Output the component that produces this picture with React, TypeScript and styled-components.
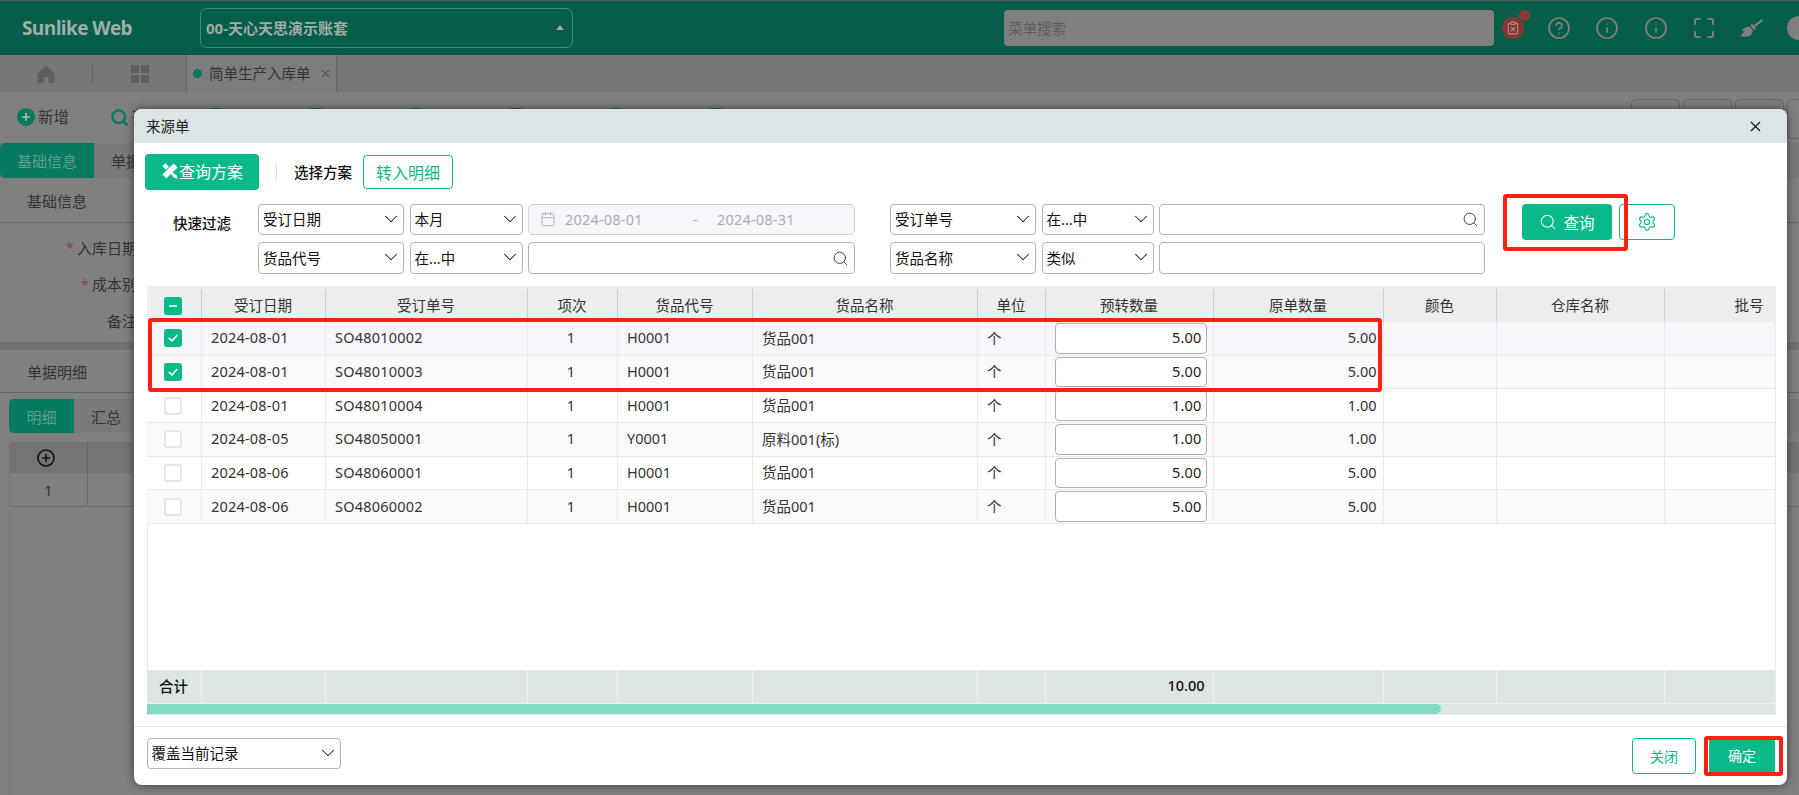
import React from "react";
import styled, { createGlobalStyle } from "styled-components";
import {
  Calendar,
  ChevronDown,
  CircleHelp,
  ClipboardX,
  Info,
  Maximize,
  Plus,
  Search,
  Settings,
  X,
} from "lucide-react";
import { FaBroom } from "react-icons/fa";

const Global = createGlobalStyle`
  html, body { margin: 0; padding: 0; height: 795px; overflow: hidden; background: #808080; }
  body { font-family: "Noto Sans", "Noto Sans CJK SC", sans-serif; font-size: 14.5px; color: #222; }
  * { box-sizing: border-box; }
`;

const Page = styled.div`
  position: relative;
  width: 1799px;
  height: 795px;
  overflow: hidden;
  background: #808080;
`;

/* ---------- dimmed page behind the dialog ---------- */
const TopBar = styled.header`
  height: 55px;
  display: flex;
  align-items: center;
  background: #055d4a;
  border-top: 1px solid #565656;
`;
const Logo = styled.div`
  width: 200px;
  flex-shrink: 0;
  padding-left: 22px;
  font: bold 19px "Open Sans", "Noto Sans", sans-serif;
  letter-spacing: -0.6px;
  color: #9fb0a9;
  white-space: nowrap;
`;
const AccountSelect = styled.div`
  width: 373px;
  height: 40px;
  flex-shrink: 0;
  display: flex;
  align-items: center;
  justify-content: space-between;
  padding: 0 8px 2px 5px;
  border: 1px solid #3b8f7b;
  border-radius: 7px;
  font-weight: bold;
  font-size: 15px;
  color: #a0aca6;
`;
const Caret = styled.span`
  width: 0;
  height: 0;
  border-left: 4.5px solid transparent;
  border-right: 4.5px solid transparent;
  border-bottom: 5px solid #a0aca6;
`;
const MenuSearch = styled.div`
  width: 489.5px;
  height: 36px;
  flex-shrink: 0;
  margin-left: 431px;
  padding: 0 0 2px 4px;
  display: flex;
  align-items: center;
  background: #808080;
  border-radius: 4px;
  color: #5d5d5d;
`;
const TopIcons = styled.div`
  display: flex;
  align-items: center;
  gap: 24.5px;
  margin-left: 8.5px;
  color: #808080;
  flex-shrink: 0;
`;
const AlertIcon = styled.span`
  position: relative;
  width: 22px;
  height: 22px;
  margin-right: -2px;
  display: flex;
  align-items: center;
  justify-content: center;
  border-radius: 50%;
  background: #8a3434;
  color: #b08a8a;
`;
const AlertDot = styled.i`
  position: absolute;
  top: -7px;
  right: -6px;
  width: 11px;
  height: 11px;
  border-radius: 50%;
  background: #8f3a3a;
`;
const Avatar = styled.span`
  width: 24px;
  height: 24px;
  border-radius: 50%;
  background: #808080;
  flex-shrink: 0;
`;
const TabBar = styled.nav`
  height: 37px;
  display: flex;
  align-items: center;
  background: #767876;
  color: #333;
`;
const NavIcon = styled.span`
  width: 46px;
  display: flex;
  justify-content: center;
  color: #5e5e5e;
`;
const NavHome = styled(NavIcon)`
  width: 92px;
`;
const NavDivider = styled.i`
  width: 1px;
  height: 18px;
  background: #5e5e5e;
`;
const NavGrid = styled(NavIcon)`
  width: 93px;
`;
const PageTab = styled.div`
  height: 37px;
  width: 151px;
  padding: 0 0 2px 6px;
  display: flex;
  align-items: center;
  border-left: 1px solid #666;
  border-right: 1px solid #666;
  background: #7c7e7c;
`;
const TabDot = styled.i`
  width: 9px;
  height: 9px;
  margin: 2px 7px 0 0;
  border-radius: 50%;
  background: #067a60;
`;
const TabClose = styled.span`
  display: flex;
  margin: 2px 0 0 8px;
`;
const ActionBar = styled.div`
  height: 51px;
  display: flex;
  padding-top: 16px;
  background: #808080;
`;
const ActionItem = styled.div<{ $w: number }>`
  width: ${(p) => p.$w}px;
  display: flex;
  align-items: flex-start;
  gap: 3px;
  font-size: 15.5px;
  line-height: 18px;
  color: #333;
  flex-shrink: 0;
`;
const PlusDot = styled.span`
  width: 18px;
  height: 18px;
  margin-left: 17px;
  display: flex;
  align-items: center;
  justify-content: center;
  border-radius: 50%;
  background: #067a60;
  color: #a5c7bd;
`;
const SearchGlyph = styled.span`
  margin-left: 14px;
  display: flex;
  color: #067a60;
`;
const Peek = styled.i<{ $c: string }>`
  display: block;
  width: 14px;
  height: 14px;
  margin-left: -7px;
  border-radius: 3px;
  background: ${(p) => p.$c};
`;
const PeekSpot = styled.div`
  width: 100px;
  flex-shrink: 0;
`;
const Tools = styled.div`
  display: flex;
  gap: 3px;
  margin-top: -9px;
  margin-left: 815px;
  flex-shrink: 0;
`;
const ToolButton = styled.div`
  width: 49px;
  height: 40px;
  flex-shrink: 0;
  border: 1px solid #686868;
  border-radius: 5px;
`;
const SegTabs = styled.div`
  height: 35px;
  display: flex;
  align-items: center;
  background: #7a7a7a;
`;
const SegActive = styled.div`
  width: 94px;
  height: 35px;
  display: flex;
  align-items: center;
  justify-content: center;
  border-radius: 5px 0 0 5px;
  background: #067a60;
  color: #5ea08d;
  font-size: 15px;
`;
const SegPlain = styled.div`
  padding-left: 17px;
  color: #333;
  font-size: 15px;
`;
const SectionTitle = styled.div`
  height: 45px;
  padding-left: 27px;
  display: flex;
  align-items: center;
  border-bottom: 1px solid #666;
  color: #333;
  font-size: 15px;
`;
const ShortTitle = styled(SectionTitle)`
  height: 43px;
`;
const FieldList = styled.div`
  height: 119px;
  padding-top: 6px;
`;
const FieldLabel = styled.div`
  width: 137px;
  height: 36.5px;
  display: flex;
  align-items: center;
  justify-content: flex-end;
  gap: 3px;
  color: #333;
  font-size: 15px;
  white-space: nowrap;
`;
const Star = styled.span`
  color: #8b3f3f;
`;
const Band = styled.div`
  height: 8px;
  background: #727272;
`;
const SubTabs = styled.div`
  display: flex;
  margin: 6px 0 0 9px;
  height: 34px;
  background: #7a7a7a;
`;
const SubActive = styled.div`
  width: 65px;
  display: flex;
  align-items: center;
  justify-content: center;
  border-radius: 5px 0 0 5px;
  background: #067a60;
  color: #5ea08d;
  font-size: 15px;
`;
const SubPlain = styled.div`
  padding-left: 17px;
  display: flex;
  align-items: center;
  color: #333;
  font-size: 15px;
`;
const BackTable = styled.div`
  margin: 9px 0 0 9px;
  height: 353px;
  border-left: 1px solid #747474;
`;
const BackHead = styled.div`
  height: 31px;
  display: grid;
  grid-template-columns: 78px 1fr;
  align-items: center;
  background: #737573;
`;
const BackIndexHead = styled.div`
  height: 31px;
  padding-right: 6px;
  display: flex;
  align-items: center;
  justify-content: center;
  border-right: 1px solid #666;
  color: #222;
`;
const BackRow = styled.div`
  height: 34px;
  display: grid;
  grid-template-columns: 78px 1fr;
  border-bottom: 1px solid #6c6c6c;
`;
const BackIndex = styled.div`
  display: flex;
  align-items: center;
  justify-content: center;
  border-right: 1px solid #6c6c6c;
  color: #333;
`;

/* ---------- dialog ---------- */
const Dialog = styled.section`
  position: absolute;
  left: 134px;
  top: 109px;
  width: 1653px;
  height: 676px;
  display: flex;
  flex-direction: column;
  background: #fff;
  border-radius: 8px;
  box-shadow: 0 0 10px rgba(0, 0, 0, 0.55);
  overflow: hidden;
`;
const DialogHead = styled.div`
  height: 34px;
  flex-shrink: 0;
  display: flex;
  align-items: center;
  justify-content: space-between;
  padding: 0 23px 2px 12px;
  background: #dce5e6;
  color: #222;
`;
const CloseButton = styled.span`
  display: flex;
  margin-top: 2px;
  color: #111;
`;
const DialogBody = styled.div`
  flex: 1;
  padding: 11px 12px 0 11px;
  display: flex;
  flex-direction: column;
  min-height: 0;
`;
const PlanBar = styled.div`
  height: 36px;
  flex-shrink: 0;
  display: flex;
  align-items: center;
`;
const PlanButton = styled.button`
  width: 114px;
  height: 36px;
  display: flex;
  align-items: center;
  justify-content: center;
  gap: 0;
  padding: 0 0 2px;
  border: 0;
  border-radius: 4px;
  background: #0ab98a;
  color: #fff;
  font: inherit;
  font-size: 16px;
`;
const PlanDivider = styled.i`
  width: 1px;
  height: 14px;
  margin: 0 17px;
  background: #d8d8d8;
`;
const PlanLabel = styled.span`
  font-weight: 500;
  color: #111;
  margin: -2px 11px 0 0;
`;
const OutlineButton = styled.button<{ $w: number; $h: number; $size?: number }>`
  width: ${(p) => p.$w}px;
  height: ${(p) => p.$h}px;
  display: flex;
  align-items: center;
  justify-content: center;
  padding: 0 0 1px;
  background: #fff;
  border: 1px solid #0ab98a;
  border-radius: 4px;
  color: #0ab98a;
  font: inherit;
  font-size: ${(p) => p.$size ?? 16}px;
`;
const FilterBar = styled.div`
  margin-top: 14px;
  height: 70px;
  flex-shrink: 0;
  display: flex;
  align-items: flex-start;
`;
const FilterLabel = styled.div`
  width: 113px;
  height: 36px;
  padding-left: 28px;
  display: flex;
  align-items: center;
  font-weight: 500;
  color: #111;
`;
const FilterRows = styled.div`
  display: flex;
  flex-direction: column;
  gap: 7px;
  width: 1227px;
`;
const FilterRow = styled.div<{ $h: number }>`
  height: ${(p) => p.$h}px;
  display: flex;
  gap: 35px;
`;
const FilterGroup = styled.div`
  display: flex;
  gap: 5.5px;
`;
const SelectBox = styled.div<{ $w: number }>`
  width: ${(p) => p.$w}px;
  height: 100%;
  display: flex;
  align-items: center;
  justify-content: space-between;
  padding: 0 1px 2px 4px;
  background: #fff;
  border: 1px solid #b4b4b4;
  border-radius: 4px;
  color: #111;
  white-space: nowrap;
`;
const DateRange = styled.div`
  width: 327px;
  height: 100%;
  display: flex;
  align-items: center;
  padding: 0 0 1px 11px;
  background: #f5f6fa;
  border: 1px solid #cfd2da;
  border-radius: 5px;
  color: #a9adb7;
`;
const DateText = styled.span`
  margin-left: 9px;
  width: 80px;
  letter-spacing: 0.2px;
  white-space: nowrap;
`;
const DateDash = styled.span`
  margin: 0 7px 0 48px;
  width: 8px;
`;
const SearchInput = styled.div<{ $w: number }>`
  width: ${(p) => p.$w}px;
  height: 100%;
  display: flex;
  align-items: center;
  justify-content: flex-end;
  padding-right: 5px;
  background: #fff;
  border: 1px solid #b4b4b4;
  border-radius: 4px;
  color: #333;
`;
const QueryButton = styled.button`
  width: 90px;
  height: 36px;
  margin-left: 37px;
  display: flex;
  align-items: center;
  justify-content: center;
  gap: 6px;
  padding: 0;
  border: 0;
  border-radius: 4px;
  background: #0ab98a;
  color: #fff;
  font: inherit;
  font-size: 15.5px;
`;
const GearButton = styled(OutlineButton)`
  margin-left: 7px;
`;

const COLUMNS = "55px 124px 202px 90px 135px 225px 68px 168px 170px 113px 168px 111px";

const Grid = styled.div`
  margin: 12px 0 0 1.5px;
  width: 1629px;
  flex: 1;
  display: flex;
  flex-direction: column;
  min-height: 0;
  border-left: 1px solid #e8e8ee;
  border-right: 1px solid #e8e8ee;
  border-bottom: 1px solid #e8e8ee;
`;
const HeadRow = styled.div`
  height: 36px;
  flex-shrink: 0;
  display: grid;
  grid-template-columns: ${COLUMNS};
  background: #ebeeed;
  border-top: 3px solid #f0f2f1;
  margin-left: -1px;
  margin-right: -1px;
`;
const HeadCell = styled.div`
  display: flex;
  align-items: center;
  justify-content: center;
  padding-bottom: 3px;
  border-right: 1px solid #c9cee0;
  color: #333;
  white-space: nowrap;
  &:first-child { padding: 0 2px 0 0; }
  &:last-child { border-right: 0; padding-left: 58px; }
`;
const BodyRow = styled.div<{ $bg: string }>`
  height: 33.67px;
  flex-shrink: 0;
  display: grid;
  grid-template-columns: ${COLUMNS};
  margin-left: -1px;
  background: ${(p) => p.$bg};
  border-bottom: 1px solid #e8e8ee;
`;
const Cell = styled.div<{ $align?: string; $num?: boolean }>`
  display: flex;
  align-items: center;
  justify-content: ${(p) => p.$align ?? "flex-start"};
  padding: ${(p) => (p.$align === "center" ? "0 2px 2px 0" : "0 6px 2px 9.5px")};
  border-right: 1px solid #e8e8ee;
  color: #333;
  white-space: nowrap;
  letter-spacing: ${(p) => (p.$num ? "0.2px" : "0")};
  &:last-child { border-right: 0; }
`;
const CheckCell = styled(Cell)`
  padding: 0 2px 0 0;
`;
const QtyCell = styled(Cell)`
  padding: 1px 6px 1px 9.5px;
`;
const QtyInput = styled.input`
  width: 100%;
  height: 100%;
  padding: 0 4px 2px 0;
  border: 1px solid #b0b0b0;
  border-radius: 4px;
  outline: 0;
  text-align: right;
  background: #fff;
  color: #222;
  font: inherit;
  letter-spacing: 0.2px;
`;
const Check = styled.span<{ $on?: boolean }>`
  width: 18px;
  height: 18px;
  display: flex;
  align-items: center;
  justify-content: center;
  border-radius: 3px;
  background: ${(p) => (p.$on ? "#0ab98a" : "#fff")};
  border: ${(p) => (p.$on ? "0" : "2px solid #e2e6ee")};
`;
const GridFill = styled.div`
  flex: 1;
`;
const SumRow = styled.div`
  height: 34px;
  flex-shrink: 0;
  display: grid;
  grid-template-columns: ${COLUMNS};
  margin-left: -1px;
  background: #dce5e3;
  border-bottom: 1px solid #eef1f0;
`;
const SumCell = styled.div<{ $end?: boolean; $mid?: boolean }>`
  display: flex;
  align-items: center;
  justify-content: ${(p) => (p.$end ? "flex-end" : p.$mid ? "center" : "flex-start")};
  padding-right: ${(p) => (p.$end ? "8px" : "0")};
  padding-bottom: 2px;
  border-right: 1px solid #eef1f0;
  font-weight: 500;
  color: #111;
  &:last-child { border-right: 0; }
`;
const ScrollTrack = styled.div`
  height: 10px;
  flex-shrink: 0;
  margin-left: -1px;
  background: #dce5e3;
`;
const ScrollThumb = styled.div`
  width: 1294.5px;
  height: 100%;
  border-radius: 0 6px 6px 0;
  background: #84dbc3;
`;
const DialogFoot = styled.div`
  height: 59px;
  margin-top: 11.5px;
  flex-shrink: 0;
  display: flex;
  align-items: flex-start;
  justify-content: space-between;
  padding: 11px 12px 0 12.5px;
  border-top: 1px solid #dfe3ea;
`;
const ModeSelect = styled(SelectBox)`
  height: 31px;
`;
const FootButtons = styled.div`
  display: flex;
  gap: 13px;
`;
const ConfirmButton = styled.button`
  width: 66px;
  height: 36px;
  padding: 0 0 2px;
  border: 0;
  border-radius: 4px;
  background: #0ab98a;
  color: #fff;
  font: inherit;
  font-size: 14px;
`;

/* ---------- red annotation frames lying over the dialog ---------- */
const RedFrame = styled.div`
  position: absolute;
  border: 4px solid #ff2010;
  border-radius: 3px;
  pointer-events: none;
`;
const RowsFrame = styled(RedFrame)`
  left: 148px;
  top: 318px;
  width: 1234px;
  height: 74px;
`;
const QueryFrame = styled(RedFrame)`
  left: 1503px;
  top: 194px;
  width: 124.5px;
  height: 57px;
`;
const ConfirmFrame = styled(RedFrame)`
  left: 1704px;
  top: 736px;
  width: 78.5px;
  height: 40px;
`;

const HEADS = ["受订日期", "受订单号", "项次", "货品代号", "货品名称", "单位", "预转数量", "原单数量", "颜色", "仓库名称", "批号"];
const ROWS = [
  { on: true, bg: "#f4f6fa", date: "2024-08-01", no: "SO48010002", code: "H0001", name: "货品001", qty: "5.00" },
  { on: true, bg: "#f9f9f9", date: "2024-08-01", no: "SO48010003", code: "H0001", name: "货品001", qty: "5.00" },
  { on: false, bg: "#ffffff", date: "2024-08-01", no: "SO48010004", code: "H0001", name: "货品001", qty: "1.00" },
  { on: false, bg: "#f9f9f9", date: "2024-08-05", no: "SO48050001", code: "Y0001", name: "原料001(标)", qty: "1.00" },
  { on: false, bg: "#ffffff", date: "2024-08-06", no: "SO48060001", code: "H0001", name: "货品001", qty: "5.00" },
  { on: false, bg: "#f9f9f9", date: "2024-08-06", no: "SO48060002", code: "H0001", name: "货品001", qty: "5.00" },
];

const Chevron = () => <ChevronDown size={22} strokeWidth={1.15} color="#222" />;

const HomeGlyph = () => (
  <svg width="18" height="18" viewBox="0 0 18 18" fill="currentColor">
    <path d="M9 0.5 L0.5 8.6 V18 H6.5 V12 H11.5 V18 H17.5 V8.6 Z" />
  </svg>
);
const GridGlyph = () => (
  <svg width="18" height="18" viewBox="0 0 18 18" fill="currentColor">
    <rect x="0" y="0" width="8" height="8" />
    <rect x="10" y="0" width="8" height="8" />
    <rect x="0" y="10" width="8" height="8" />
    <rect x="10" y="10" width="8" height="8" />
  </svg>
);
const PlanGlyph = () => (
  <svg width="18" height="18" viewBox="0 0 18 18" fill="#fff">
    <path d="M12.6 1.4 L16.6 5.4 L5.4 16.6 L1.4 12.6 Z" />
    <path d="M4.4 1.2 L8 4.8 L5 7.8 L1.4 4.2 Z" />
    <path d="M11.2 10.2 L15.6 13.2 L16.8 16.8 L13.2 15.8 L10.2 12.2 Z" />
  </svg>
);
const TickGlyph = () => (
  <svg width="12" height="12" viewBox="0 0 12 12" fill="none" stroke="#fff" strokeWidth="1.6" strokeLinecap="round" strokeLinejoin="round">
    <path d="M2.2 6.4 L5 9 L9.8 3.4" />
  </svg>
);
const DashGlyph = () => (
  <svg width="12" height="12" viewBox="0 0 12 12" stroke="#fff" strokeWidth="1.5">
    <path d="M2 6 H10" />
  </svg>
);

export default function App() {
  return (
    <>
      <Global />
      <Page>
        <TopBar>
          <Logo>Sunlike Web</Logo>
          <AccountSelect>
            00-天心天思演示账套
            <Caret />
          </AccountSelect>
          <MenuSearch>菜单搜索</MenuSearch>
          <TopIcons>
            <AlertIcon>
              <ClipboardX size={14} strokeWidth={2} />
              <AlertDot />
            </AlertIcon>
            <CircleHelp size={24} strokeWidth={1.7} />
            <Info size={24} strokeWidth={1.7} />
            <Info size={24} strokeWidth={1.7} />
            <Maximize size={24} strokeWidth={1.9} />
            <FaBroom size={22} />
            <Avatar />
          </TopIcons>
        </TopBar>
        <TabBar>
          <NavHome>
            <HomeGlyph />
          </NavHome>
          <NavDivider />
          <NavGrid>
            <GridGlyph />
          </NavGrid>
          <PageTab>
            <TabDot />
            简单生产入库单
            <TabClose>
              <X size={13} strokeWidth={1.6} />
            </TabClose>
          </PageTab>
        </TabBar>
        <ActionBar>
          <ActionItem $w={96}>
            <PlusDot>
              <Plus size={12} strokeWidth={3} />
            </PlusDot>
            新增
          </ActionItem>
          <ActionItem $w={120}>
            <SearchGlyph>
              <Search size={19} strokeWidth={3} />
            </SearchGlyph>
            查询
          </ActionItem>
          <PeekSpot>
            <Peek $c="#0a6a55" />
          </PeekSpot>
          <PeekSpot>
            <Peek $c="#067a60" />
          </PeekSpot>
          <PeekSpot>
            <Peek $c="#067a60" />
          </PeekSpot>
          <PeekSpot>
            <Peek $c="#8a3434" />
          </PeekSpot>
          <PeekSpot>
            <Peek $c="#067a60" />
          </PeekSpot>
          <PeekSpot>
            <Peek $c="#067a60" />
          </PeekSpot>
          <Tools>
            <ToolButton />
            <ToolButton />
            <ToolButton />
            <ToolButton />
          </Tools>
        </ActionBar>
        <SegTabs>
          <SegActive>基础信息</SegActive>
          <SegPlain>单据</SegPlain>
        </SegTabs>
        <SectionTitle>基础信息</SectionTitle>
        <FieldList>
          <FieldLabel>
            <Star>*</Star>入库日期
          </FieldLabel>
          <FieldLabel>
            <Star>*</Star>成本别
          </FieldLabel>
          <FieldLabel>备注</FieldLabel>
        </FieldList>
        <Band />
        <ShortTitle>单据明细</ShortTitle>
        <SubTabs>
          <SubActive>明细</SubActive>
          <SubPlain>汇总</SubPlain>
        </SubTabs>
        <BackTable>
          <BackHead>
            <BackIndexHead>
              <svg width="18" height="18" viewBox="0 0 18 18" fill="none" stroke="#111" strokeWidth="1.6">
                <circle cx="9" cy="9" r="8" />
                <path d="M9 5 V13 M5 9 H13" />
              </svg>
            </BackIndexHead>
          </BackHead>
          <BackRow>
            <BackIndex>1</BackIndex>
          </BackRow>
        </BackTable>

        <Dialog>
          <DialogHead>
            来源单
            <CloseButton>
              <X size={17} strokeWidth={1.5} />
            </CloseButton>
          </DialogHead>
          <DialogBody>
            <PlanBar>
              <PlanButton>
                <PlanGlyph />
                查询方案
              </PlanButton>
              <PlanDivider />
              <PlanLabel>选择方案</PlanLabel>
              <OutlineButton $w={90} $h={34}>转入明细</OutlineButton>
            </PlanBar>
            <FilterBar>
              <FilterLabel>快速过滤</FilterLabel>
              <FilterRows>
                <FilterRow $h={31}>
                  <FilterGroup>
                    <SelectBox $w={146}>受订日期<Chevron /></SelectBox>
                    <SelectBox $w={113}>本月<Chevron /></SelectBox>
                    <DateRange>
                      <Calendar size={16} strokeWidth={1.3} />
                      <DateText>2024-08-01</DateText>
                      <DateDash>-</DateDash>
                      <DateText>2024-08-31</DateText>
                    </DateRange>
                  </FilterGroup>
                  <FilterGroup>
                    <SelectBox $w={146}>受订单号<Chevron /></SelectBox>
                    <SelectBox $w={112}>在...中<Chevron /></SelectBox>
                    <SearchInput $w={326}>
                      <Search size={17} strokeWidth={1.3} />
                    </SearchInput>
                  </FilterGroup>
                </FilterRow>
                <FilterRow $h={32}>
                  <FilterGroup>
                    <SelectBox $w={146}>货品代号<Chevron /></SelectBox>
                    <SelectBox $w={113}>在...中<Chevron /></SelectBox>
                    <SearchInput $w={327}>
                      <Search size={17} strokeWidth={1.3} />
                    </SearchInput>
                  </FilterGroup>
                  <FilterGroup>
                    <SelectBox $w={146}>货品名称<Chevron /></SelectBox>
                    <SelectBox $w={112}>类似<Chevron /></SelectBox>
                    <SearchInput $w={326} />
                  </FilterGroup>
                </FilterRow>
              </FilterRows>
              <QueryButton>
                <Search size={18} strokeWidth={1.4} />
                查询
              </QueryButton>
              <GearButton $w={55.5} $h={36}>
                <Settings size={20} strokeWidth={1.4} />
              </GearButton>
            </FilterBar>
            <Grid>
              <HeadRow>
                <HeadCell>
                  <Check $on>
                    <DashGlyph />
                  </Check>
                </HeadCell>
                {HEADS.map((h) => (
                  <HeadCell key={h}>{h}</HeadCell>
                ))}
              </HeadRow>
              {ROWS.map((r) => (
                <BodyRow key={r.no} $bg={r.bg}>
                  <CheckCell $align="center">
                    <Check $on={r.on}>{r.on && <TickGlyph />}</Check>
                  </CheckCell>
                  <Cell $num>{r.date}</Cell>
                  <Cell $num>{r.no}</Cell>
                  <Cell $align="center">1</Cell>
                  <Cell>{r.code}</Cell>
                  <Cell>{r.name}</Cell>
                  <Cell>个</Cell>
                  <QtyCell>
                    <QtyInput readOnly value={r.qty} />
                  </QtyCell>
                  <Cell $align="flex-end">{r.qty}</Cell>
                  <Cell />
                  <Cell />
                  <Cell />
                </BodyRow>
              ))}
              <GridFill />
              <SumRow>
                <SumCell $mid>合计</SumCell>
                <SumCell />
                <SumCell />
                <SumCell />
                <SumCell />
                <SumCell />
                <SumCell />
                <SumCell $end>10.00</SumCell>
                <SumCell />
                <SumCell />
                <SumCell />
                <SumCell />
              </SumRow>
              <ScrollTrack>
                <ScrollThumb />
              </ScrollTrack>
            </Grid>
          </DialogBody>
          <DialogFoot>
            <ModeSelect $w={194}>覆盖当前记录<Chevron /></ModeSelect>
            <FootButtons>
              <OutlineButton $w={64} $h={36} $size={14}>关闭</OutlineButton>
              <ConfirmButton>确定</ConfirmButton>
            </FootButtons>
          </DialogFoot>
        </Dialog>
        <RowsFrame />
        <QueryFrame />
        <ConfirmFrame />
      </Page>
    </>
  );
}
